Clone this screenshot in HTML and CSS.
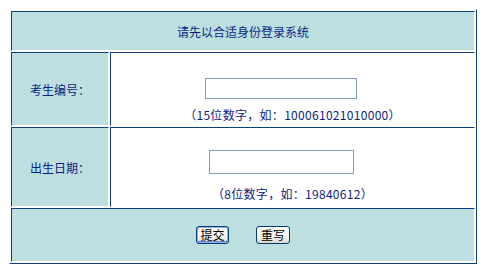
FILE: index.html
```html
<!DOCTYPE html>
<html>
<head>
<meta charset="utf-8">
<link rel="stylesheet" href="styles.css">
</head>
<body>
<table class="login">
  <tr>
    <td colspan="2" class="cell head">请先以合适身份登录系统</td>
  </tr>
  <tr class="row-id">
    <td class="cell label">考生编号：</td>
    <td class="cell field field-id">
      <div class="stack">
        <input type="text" class="inp inp-id">
        <span class="hint">（15位数字，如：100061021010000）</span>
      </div>
    </td>
  </tr>
  <tr class="row-birth">
    <td class="cell label">出生日期：</td>
    <td class="cell field field-birth">
      <div class="stack">
        <input type="text" class="inp inp-birth">
        <span class="hint">（8位数字，如：19840612）</span>
      </div>
    </td>
  </tr>
  <tr>
    <td colspan="2" class="cell foot">
      <div class="btns">
        <button class="btn btn-default">提交</button>
        <button class="btn">重写</button>
      </div>
    </td>
  </tr>
</table>
</body>
</html>
```

FILE: styles.css
```css
html, body {
  margin: 0;
  padding: 0;
  background: #ffffff;
}
body {
  font-family: "Noto Sans CJK SC", "Noto Sans", sans-serif;
  font-size: 12px;
  color: #0c1e80;
  text-spacing-trim: space-all;
}
.login {
  margin: 9px 0 0 9px;
  width: 468px;
  border-collapse: separate;
  border-spacing: 1px;
  border-style: solid;
  border-width: 1px;
  border-color: #ffffff #0b3f7d #0b3f7d #ffffff;
}
.cell {
  box-sizing: border-box;
  padding: 0;
  border-style: solid;
  border-width: 1px;
  border-color: #0b3f7d #ffffff #ffffff #0b3f7d;
  vertical-align: middle;
}
.head {
  height: 40px;
  background: #bddfe0;
  text-align: center;
}
.label {
  width: 98px;
  background: #bddfe0;
  text-align: center;
}
.field {
  width: 365px;
  background: #ffffff;
  vertical-align: top;
}
.row-id .cell { height: 74px; }
.row-birth .cell { height: 80px; }
.field-id { padding-top: 25px; }
.field-birth { padding-top: 22px; }
.stack {
  display: flex;
  flex-direction: column;
  align-items: center;
}
.inp {
  box-sizing: border-box;
  margin: 0 23px 0 0;
  padding: 0 2px;
  border: 1px solid #7f9db9;
  background: #fff;
  font: 12px "Noto Sans CJK SC", sans-serif;
}
.inp-id { width: 152px; height: 21px; }
.inp-birth { width: 145px; height: 24px; }
.hint {
  line-height: 16px;
  white-space: nowrap;
  letter-spacing: 0.3px;
}
.field-id .hint { margin-top: 8px; }
.field-birth .hint { margin-top: 12px; }
.foot {
  height: 54px;
  background: #bddfe0;
}
.btns {
  display: flex;
  justify-content: center;
  gap: 27px;
}
.btn {
  box-sizing: border-box;
  width: 34px;
  height: 18px;
  padding: 0;
  border: 1px solid #003c74;
  border-radius: 3px;
  background: linear-gradient(#ffffff, #f3f2ee 60%, #e3e0d8 90%, #d6d0c5);
  font: 12px/16px "Noto Sans CJK SC", sans-serif;
  color: #000;
  text-spacing-trim: space-all;
}
.btn-default {
  width: 33px;
  box-shadow: inset 0 0 0 1px #97aee6, inset 0 -1px 0 1px #6a8ad8;
}
```
